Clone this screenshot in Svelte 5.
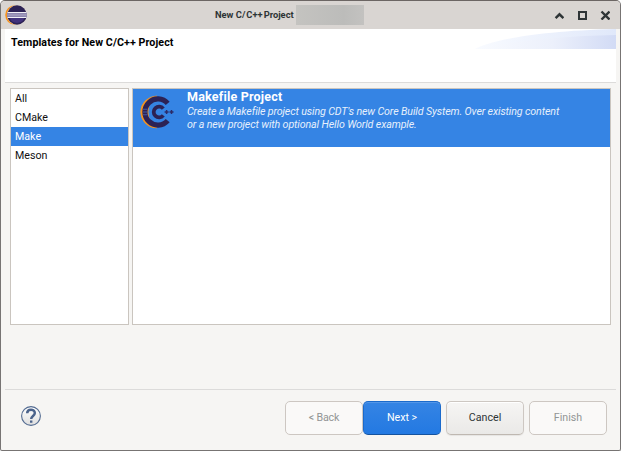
<script>
  const categories = ['All', 'CMake', 'Make', 'Meson'];
  let selected = $state('Make');
</script>

<div class="window">
  <header class="titlebar">
    <svg class="logo" width="22" height="20" viewBox="0 0 22 20">
      <circle cx="10" cy="10" r="9.8" fill="#f7941e" />
      <circle cx="12" cy="10" r="10" fill="#e8dcd0" />
      <circle cx="12" cy="10" r="9.7" fill="#2c2255" />
      <ellipse cx="12" cy="13" rx="7" ry="5" fill="#42327c" />
      <path d="M2.6 7h18.8l.4 1.4v3.2l-.4 1.4H2.6l-.4-1.4V8.4z" fill="#8d86ae" />
      <path d="M2.6 7h18.8v1H2.6zM2.6 12h18.8v1H2.6z" fill="#f1eff6" />
      <path d="M2.2 10h19.6" stroke="#b7b1cf" stroke-width=".8" />
    </svg>
    <span class="title">New C/<i></i>C++<b></b>Project</span>
    <span class="redacted"></span>
    <div class="controls">
      <svg width="10" height="10" viewBox="0 0 10 10"><path d="M1.6 8.2 5.5 4.3l3.9 3.9" fill="none" stroke="#2e3436" stroke-width="2.4" /></svg>
      <svg width="10" height="10" viewBox="0 0 10 10"><path d="M2 2h7v7H2z" fill="none" stroke="#2e3436" stroke-width="2" /></svg>
      <svg width="10" height="10" viewBox="0 0 10 10"><path d="m1.5 1.5 8 8M9.5 1.5l-8 8" fill="none" stroke="#2e3436" stroke-width="2.4" /></svg>
    </div>
  </header>

  <section class="banner">
    <h1>Templates for New C/C++ Project</h1>
    <svg class="swoosh" width="141" height="20" viewBox="0 0 141 20">
      <defs>
        <linearGradient id="sweep"><stop offset="0" stop-color="#f9fbff" /><stop offset=".55" stop-color="#ecf0fb" /><stop offset="1" stop-color="#d2dbf5" /></linearGradient>
        <linearGradient id="edge"><stop offset="0" stop-color="#f9fbff" /><stop offset="1" stop-color="#e0e8fa" /></linearGradient>
      </defs>
      <path d="M0 20C12 13 55 2 141 0v20z" fill="url(#edge)" />
      <path d="M0 20C25 15 72 7 141 6v14z" fill="url(#sweep)" />
    </svg>
  </section>

  <main>
    <ul class="categories">
      {#each categories as name}
        <li class:active={selected === name}><button onclick={() => (selected = name)}>{name}</button></li>
      {/each}
    </ul>
    <div class="templates">
      <article>
        <svg class="cdt" width="36" height="34" viewBox="0 0 36 34">
          <path d="M18 .9A16.4 16.1 0 0 0 18 33.1A19 19 0 0 1 18 .9z" fill="#f7941e" stroke="#f7941e" stroke-width=".5" />
          <path d="M28.7 8.4A13 13.1 0 1 0 28.7 25.6" fill="none" stroke="#2c2255" stroke-width="5.2" />
          <path d="M24.3 13.6A5.4 5.4 0 1 0 24.3 20.4" fill="none" stroke="#2c2255" stroke-width="3.8" />
          <path d="M4 14.2h4.5M4 17h4.5M4 19.8h4.5" stroke="#405aa4" stroke-width="1.1" />
          <path d="M25.6 17h4M27.6 15v4M30.5 17h4M32.5 15v4" stroke="#2c2b68" stroke-width="1.5" />
        </svg>
        <div>
          <h2>Makefile Project</h2>
          <p>Create a Makefile project using CDT's new Core Build System. Over existing content</p>
          <p>or a new project with optional Hello World example.</p>
        </div>
      </article>
    </div>
  </main>

  <footer>
    <svg class="help" width="20" height="20" viewBox="0 0 20 20">
      <defs><linearGradient id="disc" x2="0" y2="1"><stop stop-color="#fff" /><stop offset="1" stop-color="#dedede" /></linearGradient></defs>
      <circle cx="10" cy="10" r="9.4" fill="url(#disc)" stroke="#536b91" stroke-width="1.1" />
      <path d="M6.2 7.3C6.2 2.6 13.8 2.7 13.8 7c0 3-3.6 3-3.6 6" fill="none" stroke="#4b638b" stroke-width="2.5" />
      <path d="M9 14.6h2.4v2.2H9z" fill="#4b638b" />
    </svg>
    <div class="buttons">
      <button class="disabled back">&lt; Back</button>
      <button class="primary">Next &gt;</button>
      <button class="cancel">Cancel</button>
      <button class="disabled finish">Finish</button>
    </div>
  </footer>
</div>

<style>
  :global(body) { background: #fff; }
  .window, .window * { box-sizing: border-box; }
  .window {
    width: 621px; height: 451px; border: 1px solid #777473; border-top-color: #6c6664;
    border-radius: 5px 5px 2px 2px; background: #f6f5f3; overflow: hidden;
    display: flex; flex-direction: column;
    font: 10.67px/13px Roboto, "Liberation Sans", sans-serif; color: #111;
  }
  button { font: inherit; color: inherit; margin: 0; }
  .titlebar { height: 28px; background: #d9d5d2; display: flex; align-items: center; flex: none; padding-left: 4px; }
  .logo { flex: none; }
  .title { width: 81px; margin-left: 188px; margin-top: -1px; font-size: 9.33px; font-weight: 700; color: #2e3436; white-space: nowrap; }
  .title i { margin-left: 1px; }
  .title b { margin-left: 1px; }
  .redacted { width: 68px; height: 20px; background: linear-gradient(90deg, #c4c3c0, #bcbcba 70%, #c3c2c0); }
  .controls { display: flex; gap: 13px; margin-left: auto; margin-right: 10px; }
  .banner { height: 54px; flex: none; margin: 0 4px; background: #fff; border-bottom: 1px solid #dcdbda; display: flex; justify-content: space-between; }
  h1 { margin: 7px 0 0 6px; font-size: 10.67px; line-height: 13px; font-weight: 700; color: #000; white-space: nowrap; letter-spacing: .09px; }
  .swoosh { flex: none; }
  main { display: flex; gap: 3px; padding: 5px 9px 0; height: 306px; flex: none; }
  .categories { list-style: none; margin: 0; padding: 0; width: 119px; height: 237px; border: 1px solid #cac5bf; background: #fff; }
  li { height: 19px; }
  li button { width: 100%; height: 19px; border: 0; padding: 0 0 0 4px; background: none; text-align: left; display: flex; align-items: center; }
  .active { background: #3584e4; color: #fff; }
  .templates { width: 479px; height: 237px; border: 1px solid #cac5bf; background: #fff; }
  article { height: 58px; background: #3584e4; color: #fff; display: flex; }
  .cdt { margin: 6px 0 0 6px; flex: none; }
  article > div { margin-left: 12px; }
  h2 { margin: 1px 0 1px; font-size: 12.5px; line-height: 14px; font-weight: 700; letter-spacing: .2px; }
  p { margin: 0; font-size: 10.67px; line-height: 13px; font-style: italic; white-space: nowrap; color: #e6f0fc; letter-spacing: -.12px; }
  footer { flex: 1; margin: 0 4px; border-top: 1px solid #dcdbda; display: flex; padding: 11px 9px 0 16px; justify-content: space-between; }
  .help { margin-top: 5px; flex: none; }
  .buttons { display: flex; }
  .buttons button { width: 78px; height: 34px; padding: 0 0 1px; border: 1px solid #cdc7c2; border-radius: 5px; }
  .buttons .disabled { background: #faf9f8; color: #929595; }
  .buttons .back { letter-spacing: -.2px; }
  .buttons .primary { background: linear-gradient(#3584e4, #2379e2); border-color: #1b6acb; border-bottom-color: #15539e; color: #fff; box-shadow: inset 0 1px #5396e8; }
  .buttons .cancel { margin: 0 5px; background: linear-gradient(#f6f5f4, #eae9e7); color: #2e3436; border-bottom-color: #bfb8b1; box-shadow: inset 0 1px #fff, 0 1px 1px #0001; }
</style>
